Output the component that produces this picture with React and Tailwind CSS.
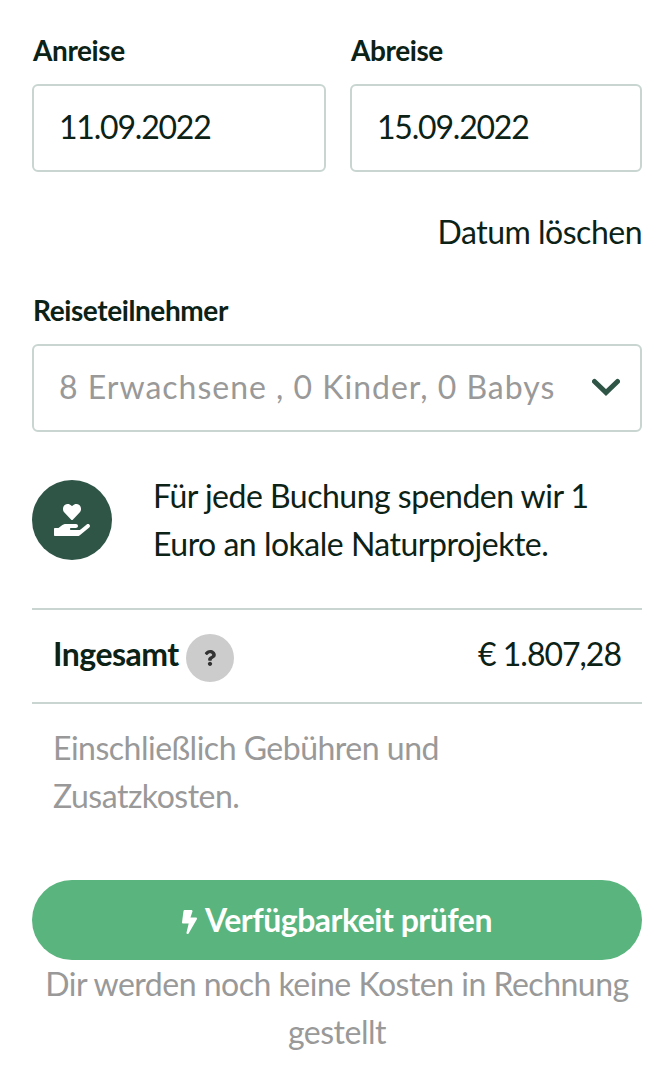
import { FaBolt, FaHandHoldingHeart, FaQuestion } from 'react-icons/fa';

function Field({ label, children, className }) {
  return (
    <div className={className}>
      <div className="h-[52px] pl-px text-[28px] leading-[36px] font-bold tracking-[-0.4px]">{label}</div>
      <div className="flex h-[88px] items-center justify-between rounded-md border-2 border-[#c8d5d1] pl-[25px] pr-5 pb-[2px]">
        {children}
      </div>
    </div>
  );
}

export default function App() {
  return (
    <div className="h-[1078px] bg-white pl-8 pr-7 pt-8 font-['Lato',sans-serif] text-[32px] leading-[48px] whitespace-nowrap text-[#0c2216]">
      {/* Dates */}
      <div className="flex gap-6">
        <Field label="Anreise" className="w-[294px]">
          <span className="tracking-[-1.2px]">11.09.2022</span>
        </Field>
        <Field label="Abreise" className="w-[292px]">
          <span className="tracking-[-1.2px]">15.09.2022</span>
        </Field>
      </div>
      <div className="mt-9 text-right tracking-[-0.5px]">Datum löschen</div>

      {/* Guests */}
      <Field label="Reiseteilnehmer" className="mt-9">
        <span className="tracking-[1px] text-[#999]">8 Erwachsene , 0 Kinder, 0 Babys</span>
        <svg className="h-[18px] w-7" viewBox="0 0 28 18" fill="none">
          <path d="M2.5 3.5 14 14.5 25.5 3.5" stroke="#2f5547" strokeWidth="5" strokeLinecap="round" />
        </svg>
      </Field>

      {/* Donation */}
      <div className="mt-10 flex gap-[41px]">
        <div className="mt-2 flex size-20 items-center justify-center rounded-full bg-[#2f5547] text-white">
          <FaHandHoldingHeart className="h-8 w-9" />
        </div>
        <div>
          <div className="tracking-[-0.5px]">Für jede Buchung spenden wir 1</div>
          <div className="tracking-[-0.5px]">Euro an lokale Naturprojekte.</div>
        </div>
      </div>

      {/* Total */}
      <div className="mt-10 flex h-24 justify-between border-y-2 border-[#c8d5d1] px-[21px] pt-5">
        <div className="flex">
          <span className="font-bold tracking-[-0.5px]">Ingesamt</span>
          <span className="mt-1 ml-[7px] flex size-12 items-center justify-center rounded-full bg-[#ccc] text-[#333]">
            <FaQuestion className="size-4" />
          </span>
        </div>
        <span className="tracking-[-1px]">€ 1.807,28</span>
      </div>
      <div className="mt-5 pl-[21px] text-[#999]">
        <div className="tracking-[-0.5px]">Einschließlich Gebühren und</div>
        <div className="tracking-[-0.5px]">Zusatzkosten.</div>
      </div>

      <button className="mt-15 flex h-20 w-full items-center justify-center rounded-full bg-[#59b47d] font-bold text-white">
        <FaBolt className="mt-1 mr-2 h-6 w-[15px]" />
        <span className="tracking-[-0.5px]">Verfügbarkeit prüfen</span>
      </button>
      <div className="text-center text-[#999]">
        <div className="tracking-[-0.5px]">Dir werden noch keine Kosten in Rechnung</div>
        <div className="tracking-[-0.5px]">gestellt</div>
      </div>
    </div>
  );
}
